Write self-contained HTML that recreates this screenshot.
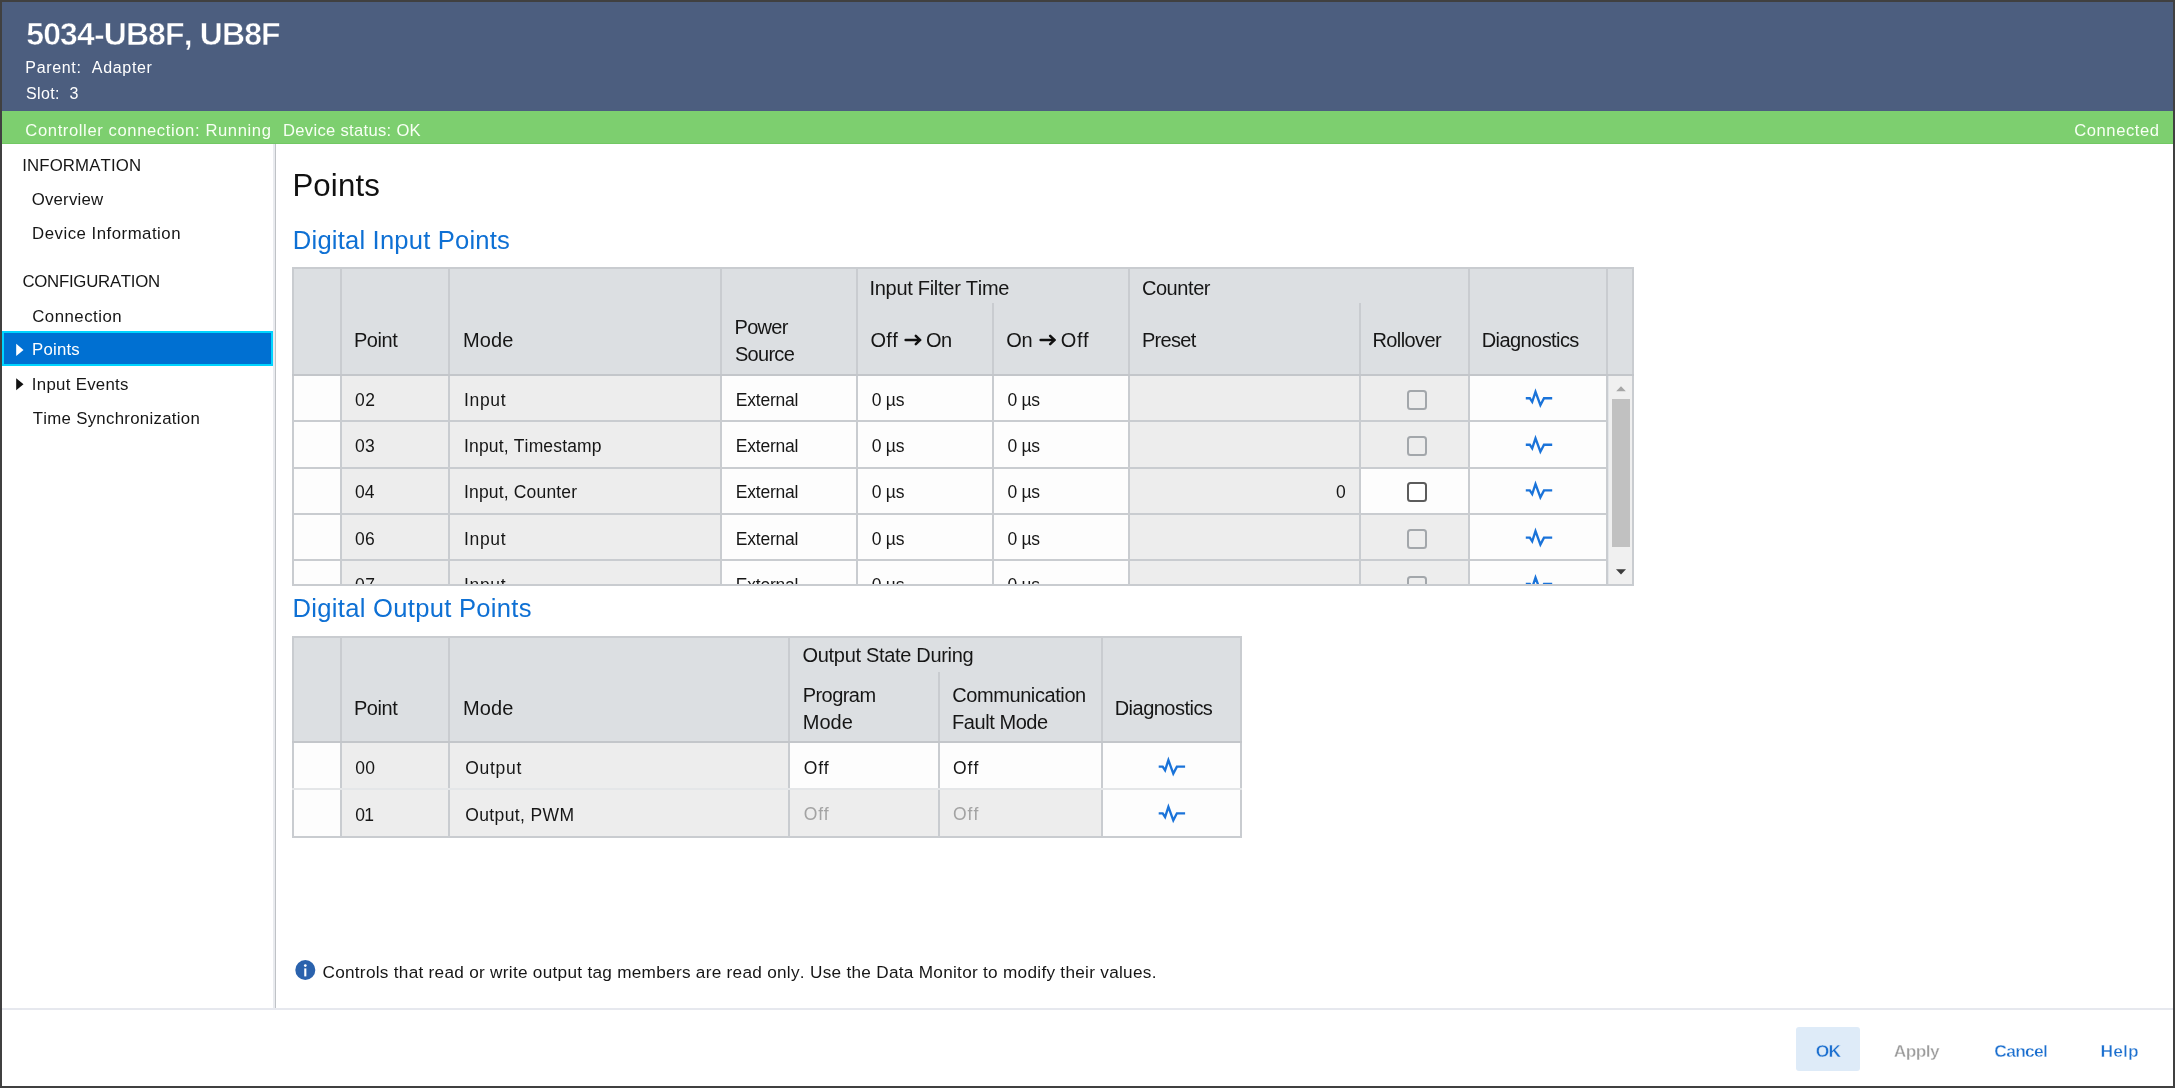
<!DOCTYPE html>
<html><head><meta charset="utf-8"><style>
html,body{margin:0;padding:0;}
body{width:2175px;height:1088px;position:relative;overflow:hidden;background:#fff;font-family:"Liberation Sans",sans-serif;}
.t{position:absolute;line-height:1;white-space:nowrap;font-kerning:none;font-variant-ligatures:none;}
.r{position:absolute;display:block;}
</style></head><body><div id="pg" style="position:absolute;left:0;top:0;width:2175px;height:1088px;filter:blur(0.35px)">
<div class="r" style="left:0px;top:0px;width:2175px;height:1088px;background:#ffffff;"></div>
<div class="r" style="left:0px;top:0px;width:2175px;height:111px;background:#4c5e7f;"></div>
<div class="r" style="left:0px;top:111px;width:2175px;height:33px;background:#7dcf6f;"></div>
<div class="r" style="left:0px;top:143px;width:2175px;height:1px;background:#72c863;"></div>
<div class="t" style="left:26.24px;top:19px;font-size:31.9px;letter-spacing:-0.822px;color:#ffffff;font-weight:bold;-webkit-text-stroke:0.5px #4c5e7f;">5034-UB8F, UB8F</div>
<div class="t" style="left:25.32px;top:60px;font-size:16.0px;letter-spacing:0.672px;color:#ffffff;font-weight:normal;">Parent:&nbsp; Adapter</div>
<div class="t" style="left:25.88px;top:86px;font-size:16.0px;letter-spacing:0.400px;color:#ffffff;font-weight:normal;">Slot:&nbsp; 3</div>
<div class="t" style="left:25.37px;top:123px;font-size:16.6px;letter-spacing:0.609px;color:#f8fff4;font-weight:normal;">Controller connection: Running</div>
<div class="t" style="left:283.07px;top:123px;font-size:16.6px;letter-spacing:0.300px;color:#f8fff4;font-weight:normal;">Device status: OK</div>
<div class="t" style="left:2074.27px;top:123px;font-size:16.6px;letter-spacing:0.551px;color:#f8fff4;font-weight:normal;">Connected</div>
<div class="r" style="left:273px;top:144px;width:2px;height:864px;background:#e9ebef;"></div>
<div class="r" style="left:275px;top:144px;width:1px;height:864px;background:#bfc2c6;"></div>
<div class="r" style="left:2px;top:1008px;width:2171px;height:2px;background:#e6e8ee;"></div>
<div class="t" style="left:22.15px;top:158px;font-size:16.8px;letter-spacing:0.156px;color:#161616;font-weight:normal;">INFORMATION</div>
<div class="t" style="left:31.70px;top:192px;font-size:16.8px;letter-spacing:0.220px;color:#161616;font-weight:normal;">Overview</div>
<div class="t" style="left:32.06px;top:226px;font-size:16.8px;letter-spacing:0.504px;color:#161616;font-weight:normal;">Device Information</div>
<div class="t" style="left:22.46px;top:274px;font-size:16.8px;letter-spacing:-0.259px;color:#161616;font-weight:normal;">CONFIGURATION</div>
<div class="t" style="left:32.26px;top:309px;font-size:16.8px;letter-spacing:0.492px;color:#161616;font-weight:normal;">Connection</div>
<div class="r" style="left:2px;top:331px;width:271px;height:35px;background:#0070d2;box-sizing:border-box;border:2px solid #00d4ff;"></div>
<svg class="r" style="left:14px;top:340px" width="12" height="20" viewBox="0 0 12 20"><path d="M2.2 3.8 L9.5 9.9 L2.2 15.9 Z" fill="#fff"/></svg>
<div class="t" style="left:32.06px;top:342px;font-size:16.8px;letter-spacing:0.206px;color:#ffffff;font-weight:normal;">Points</div>
<svg class="r" style="left:14px;top:375px" width="12" height="20" viewBox="0 0 12 20"><path d="M2.2 3.2 L9.5 9.2 L2.2 15.2 Z" fill="#111"/></svg>
<div class="t" style="left:31.85px;top:377px;font-size:16.8px;letter-spacing:0.303px;color:#161616;font-weight:normal;">Input Events</div>
<div class="t" style="left:32.72px;top:411px;font-size:16.8px;letter-spacing:0.301px;color:#161616;font-weight:normal;">Time Synchronization</div>
<div class="t" style="left:292.40px;top:170px;font-size:31.2px;letter-spacing:0.150px;color:#111111;font-weight:normal;">Points</div>
<div class="t" style="left:292.85px;top:228px;font-size:25.6px;letter-spacing:0.190px;color:#0e70d4;font-weight:normal;">Digital Input Points</div>
<div class="t" style="left:292.55px;top:596px;font-size:25.6px;letter-spacing:0.285px;color:#0e70d4;font-weight:normal;">Digital Output Points</div>
<div class="r" style="left:292px;top:267px;width:1342px;height:108px;background:#dcdfe2;"></div>
<div class="r" style="left:292px;top:375px;width:1342px;height:211px;background:#fdfdfd;"></div>
<div class="r" style="left:342px;top:376px;width:106px;height:44px;background:#ededed;"></div>
<div class="r" style="left:450px;top:376px;width:270px;height:44px;background:#ededed;"></div>
<div class="r" style="left:1130px;top:376px;width:229px;height:44px;background:#ededed;"></div>
<div class="r" style="left:1361px;top:376px;width:107px;height:44px;background:#ededed;"></div>
<div class="r" style="left:342px;top:422px;width:106px;height:45px;background:#ededed;"></div>
<div class="r" style="left:450px;top:422px;width:270px;height:45px;background:#ededed;"></div>
<div class="r" style="left:1130px;top:422px;width:229px;height:45px;background:#ededed;"></div>
<div class="r" style="left:1361px;top:422px;width:107px;height:45px;background:#ededed;"></div>
<div class="r" style="left:342px;top:469px;width:106px;height:44px;background:#ededed;"></div>
<div class="r" style="left:450px;top:469px;width:270px;height:44px;background:#ededed;"></div>
<div class="r" style="left:1130px;top:469px;width:229px;height:44px;background:#ededed;"></div>
<div class="r" style="left:342px;top:515px;width:106px;height:44px;background:#ededed;"></div>
<div class="r" style="left:450px;top:515px;width:270px;height:44px;background:#ededed;"></div>
<div class="r" style="left:1130px;top:515px;width:229px;height:44px;background:#ededed;"></div>
<div class="r" style="left:1361px;top:515px;width:107px;height:44px;background:#ededed;"></div>
<div class="r" style="left:342px;top:561px;width:106px;height:23px;background:#ededed;"></div>
<div class="r" style="left:450px;top:561px;width:270px;height:23px;background:#ededed;"></div>
<div class="r" style="left:1130px;top:561px;width:229px;height:23px;background:#ededed;"></div>
<div class="r" style="left:1361px;top:561px;width:107px;height:23px;background:#ededed;"></div>
<div class="r" style="left:1608px;top:376px;width:24px;height:208px;background:#f0f0f0;"></div>
<div class="r" style="left:1608px;top:376px;width:1px;height:208px;background:#e2e5e8;"></div>
<div class="r" style="left:1612px;top:399px;width:18px;height:148px;background:#c1c1c1;"></div>
<svg class="r" style="left:1614px;top:383px" width="14" height="10" viewBox="0 0 14 10"><path d="M2.2 8.2 L7 3.2 L11.8 8.2 Z" fill="#a6a6a6"/></svg>
<svg class="r" style="left:1614px;top:566px" width="14" height="10" viewBox="0 0 14 10"><path d="M2 3.2 L7 8.6 L12 3.2 Z" fill="#3c3c3c"/></svg>
<div class="r" style="left:292px;top:267px;width:2px;height:319px;background:#c9ccd0;"></div>
<div class="r" style="left:340px;top:267px;width:2px;height:319px;background:#c9ccd0;"></div>
<div class="r" style="left:448px;top:267px;width:2px;height:319px;background:#c9ccd0;"></div>
<div class="r" style="left:720px;top:267px;width:2px;height:319px;background:#c9ccd0;"></div>
<div class="r" style="left:856px;top:267px;width:2px;height:319px;background:#c9ccd0;"></div>
<div class="r" style="left:992px;top:303px;width:2px;height:72px;background:#c9ccd0;"></div>
<div class="r" style="left:992px;top:375px;width:2px;height:209px;background:#c9ccd0;"></div>
<div class="r" style="left:1128px;top:267px;width:2px;height:319px;background:#c9ccd0;"></div>
<div class="r" style="left:1359px;top:303px;width:2px;height:72px;background:#c9ccd0;"></div>
<div class="r" style="left:1359px;top:375px;width:2px;height:209px;background:#c9ccd0;"></div>
<div class="r" style="left:1468px;top:267px;width:2px;height:319px;background:#c9ccd0;"></div>
<div class="r" style="left:1606px;top:267px;width:2px;height:319px;background:#c9ccd0;"></div>
<div class="r" style="left:1632px;top:267px;width:2px;height:319px;background:#c9ccd0;"></div>
<div class="r" style="left:292px;top:267px;width:1342px;height:2px;background:#c9ccd0;"></div>
<div class="r" style="left:292px;top:374px;width:1342px;height:2px;background:#c3c6ca;"></div>
<div class="r" style="left:292px;top:420px;width:1314px;height:2px;background:#c9ccd0;"></div>
<div class="r" style="left:292px;top:467px;width:1314px;height:2px;background:#c9ccd0;"></div>
<div class="r" style="left:292px;top:513px;width:1314px;height:2px;background:#c9ccd0;"></div>
<div class="r" style="left:292px;top:559px;width:1314px;height:2px;background:#c9ccd0;"></div>
<div class="r" style="left:292px;top:584px;width:1342px;height:2px;background:#c9ccd0;"></div>
<div class="t" style="left:354.00px;top:330px;font-size:20.0px;letter-spacing:-0.475px;color:#161616;font-weight:normal;">Point</div>
<div class="t" style="left:462.90px;top:330px;font-size:20.0px;letter-spacing:0.117px;color:#161616;font-weight:normal;">Mode</div>
<div class="t" style="left:734.50px;top:317px;font-size:20.0px;letter-spacing:-0.700px;color:#161616;font-weight:normal;">Power</div>
<div class="t" style="left:734.90px;top:344px;font-size:20.0px;letter-spacing:-0.700px;color:#161616;font-weight:normal;">Source</div>
<div class="t" style="left:869.45px;top:278px;font-size:20.0px;letter-spacing:-0.284px;color:#161616;font-weight:normal;">Input Filter Time</div>
<div class="t" style="left:870.45px;top:330px;font-size:20.0px;letter-spacing:0.300px;color:#161616;font-weight:normal;">Off</div>
<svg class="r" style="left:903px;top:333px" width="19" height="14" viewBox="0 0 19 14"><path d="M2.6 7 H16.7" stroke="#111" stroke-width="2.5" stroke-linecap="round"/><path d="M12.8 2.9 L17 7 L12.8 11.1" fill="none" stroke="#111" stroke-width="2.5" stroke-linecap="round" stroke-linejoin="miter"/></svg>
<div class="t" style="left:926.05px;top:330px;font-size:20.0px;letter-spacing:-0.700px;color:#161616;font-weight:normal;">On</div>
<div class="t" style="left:1006.25px;top:330px;font-size:20.0px;letter-spacing:-0.250px;color:#161616;font-weight:normal;">On</div>
<svg class="r" style="left:1037.6px;top:333px" width="18.40000000000009" height="14" viewBox="0 0 18.40000000000009 14"><path d="M2.6 7 H16.10000000000009" stroke="#111" stroke-width="2.5" stroke-linecap="round"/><path d="M12.200000000000092 2.9 L16.40000000000009 7 L12.200000000000092 11.1" fill="none" stroke="#111" stroke-width="2.5" stroke-linecap="round" stroke-linejoin="miter"/></svg>
<div class="t" style="left:1060.85px;top:330px;font-size:20.0px;letter-spacing:0.550px;color:#161616;font-weight:normal;">Off</div>
<div class="t" style="left:1141.90px;top:278px;font-size:20.0px;letter-spacing:-0.425px;color:#161616;font-weight:normal;">Counter</div>
<div class="t" style="left:1141.90px;top:330px;font-size:20.0px;letter-spacing:-0.700px;color:#161616;font-weight:normal;">Preset</div>
<div class="t" style="left:1372.40px;top:330px;font-size:20.0px;letter-spacing:-0.579px;color:#161616;font-weight:normal;">Rollover</div>
<div class="t" style="left:1481.70px;top:330px;font-size:20.0px;letter-spacing:-0.570px;color:#161616;font-weight:normal;">Diagnostics</div>
<div class="r" style="left:0px;top:376px;width:1606px;height:208px;overflow:hidden">
<div class="t" style="left:354.94px;top:16.0px;font-size:17.5px;letter-spacing:0.462px;color:#161616;font-weight:normal;">02</div>
<div class="t" style="left:463.98px;top:16.0px;font-size:17.5px;letter-spacing:0.667px;color:#161616;font-weight:normal;">Input</div>
<div class="t" style="left:735.80px;top:16.0px;font-size:17.5px;letter-spacing:-0.221px;color:#161616;font-weight:normal;">External</div>
<div class="t" style="left:871.74px;top:16.0px;font-size:17.5px;letter-spacing:-0.252px;color:#161616;font-weight:normal;">0 µs</div>
<div class="t" style="left:1007.44px;top:16.0px;font-size:17.5px;letter-spacing:-0.252px;color:#161616;font-weight:normal;">0 µs</div>
<div class="r" style="left:1407px;top:14.0px;width:20px;height:20px;box-sizing:border-box;border:2px solid #a3a7ab;border-radius:3.5px;background:transparent"></div>
<svg class="r" style="left:1523px;top:9.0px" width="34" height="28" viewBox="0 0 34 28"><path d="M2.80 13.20 L6.80 13.20 L9.20 16.90 L12.50 6.80 L17.40 20.20 L21.00 13.20 L29.20 13.20" fill="none" stroke="#1a73d9" stroke-width="2.35" stroke-linejoin="miter" stroke-miterlimit="6"/></svg>
<div class="t" style="left:354.94px;top:62.0px;font-size:17.5px;letter-spacing:0.375px;color:#161616;font-weight:normal;">03</div>
<div class="t" style="left:463.98px;top:62.0px;font-size:17.5px;letter-spacing:0.160px;color:#161616;font-weight:normal;">Input, Timestamp</div>
<div class="t" style="left:735.80px;top:62.0px;font-size:17.5px;letter-spacing:-0.221px;color:#161616;font-weight:normal;">External</div>
<div class="t" style="left:871.74px;top:62.0px;font-size:17.5px;letter-spacing:-0.252px;color:#161616;font-weight:normal;">0 µs</div>
<div class="t" style="left:1007.44px;top:62.0px;font-size:17.5px;letter-spacing:-0.252px;color:#161616;font-weight:normal;">0 µs</div>
<div class="r" style="left:1407px;top:60.0px;width:20px;height:20px;box-sizing:border-box;border:2px solid #a3a7ab;border-radius:3.5px;background:transparent"></div>
<svg class="r" style="left:1523px;top:55.0px" width="34" height="28" viewBox="0 0 34 28"><path d="M2.80 13.70 L6.80 13.70 L9.20 17.40 L12.50 7.30 L17.40 20.70 L21.00 13.70 L29.20 13.70" fill="none" stroke="#1a73d9" stroke-width="2.35" stroke-linejoin="miter" stroke-miterlimit="6"/></svg>
<div class="t" style="left:354.94px;top:108.0px;font-size:17.5px;letter-spacing:0.112px;color:#161616;font-weight:normal;">04</div>
<div class="t" style="left:463.98px;top:108.0px;font-size:17.5px;letter-spacing:0.167px;color:#161616;font-weight:normal;">Input, Counter</div>
<div class="t" style="left:735.80px;top:108.0px;font-size:17.5px;letter-spacing:-0.221px;color:#161616;font-weight:normal;">External</div>
<div class="t" style="left:871.74px;top:108.0px;font-size:17.5px;letter-spacing:-0.252px;color:#161616;font-weight:normal;">0 µs</div>
<div class="t" style="left:1007.44px;top:108.0px;font-size:17.5px;letter-spacing:-0.252px;color:#161616;font-weight:normal;">0 µs</div>
<div class="t" style="left:1335.94px;top:108.0px;font-size:17.5px;letter-spacing:0.000px;color:#161616;font-weight:normal;">0</div>
<div class="r" style="left:1407px;top:106.0px;width:20px;height:20px;box-sizing:border-box;border:2px solid #5c5c5c;border-radius:3.5px;background:#fff"></div>
<svg class="r" style="left:1523px;top:101.0px" width="34" height="28" viewBox="0 0 34 28"><path d="M2.80 13.40 L6.80 13.40 L9.20 17.10 L12.50 7.00 L17.40 20.40 L21.00 13.40 L29.20 13.40" fill="none" stroke="#1a73d9" stroke-width="2.35" stroke-linejoin="miter" stroke-miterlimit="6"/></svg>
<div class="t" style="left:354.94px;top:155.0px;font-size:17.5px;letter-spacing:0.375px;color:#161616;font-weight:normal;">06</div>
<div class="t" style="left:463.98px;top:155.0px;font-size:17.5px;letter-spacing:0.667px;color:#161616;font-weight:normal;">Input</div>
<div class="t" style="left:735.80px;top:155.0px;font-size:17.5px;letter-spacing:-0.221px;color:#161616;font-weight:normal;">External</div>
<div class="t" style="left:871.74px;top:155.0px;font-size:17.5px;letter-spacing:-0.252px;color:#161616;font-weight:normal;">0 µs</div>
<div class="t" style="left:1007.44px;top:155.0px;font-size:17.5px;letter-spacing:-0.252px;color:#161616;font-weight:normal;">0 µs</div>
<div class="r" style="left:1407px;top:153.0px;width:20px;height:20px;box-sizing:border-box;border:2px solid #a3a7ab;border-radius:3.5px;background:transparent"></div>
<svg class="r" style="left:1523px;top:148.0px" width="34" height="28" viewBox="0 0 34 28"><path d="M2.80 13.60 L6.80 13.60 L9.20 17.30 L12.50 7.20 L17.40 20.60 L21.00 13.60 L29.20 13.60" fill="none" stroke="#1a73d9" stroke-width="2.35" stroke-linejoin="miter" stroke-miterlimit="6"/></svg>
<div class="t" style="left:354.94px;top:201.0px;font-size:17.5px;letter-spacing:0.462px;color:#161616;font-weight:normal;">07</div>
<div class="t" style="left:463.98px;top:201.0px;font-size:17.5px;letter-spacing:0.667px;color:#161616;font-weight:normal;">Input</div>
<div class="t" style="left:735.80px;top:201.0px;font-size:17.5px;letter-spacing:-0.221px;color:#161616;font-weight:normal;">External</div>
<div class="t" style="left:871.74px;top:201.0px;font-size:17.5px;letter-spacing:-0.252px;color:#161616;font-weight:normal;">0 µs</div>
<div class="t" style="left:1007.44px;top:201.0px;font-size:17.5px;letter-spacing:-0.252px;color:#161616;font-weight:normal;">0 µs</div>
<div class="r" style="left:1407px;top:200.0px;width:20px;height:20px;box-sizing:border-box;border:2px solid #a3a7ab;border-radius:3.5px;background:transparent"></div>
<svg class="r" style="left:1523px;top:195.0px" width="34" height="28" viewBox="0 0 34 28"><path d="M2.80 13.00 L6.80 13.00 L9.20 16.70 L12.50 6.60 L17.40 20.00 L21.00 13.00 L29.20 13.00" fill="none" stroke="#1a73d9" stroke-width="2.35" stroke-linejoin="miter" stroke-miterlimit="6"/></svg>
</div>
<div class="r" style="left:292px;top:636px;width:950px;height:105px;background:#dcdfe2;"></div>
<div class="r" style="left:292px;top:741px;width:950px;height:97px;background:#fdfdfd;"></div>
<div class="r" style="left:342px;top:743px;width:106px;height:45px;background:#ededed;"></div>
<div class="r" style="left:450px;top:743px;width:338px;height:45px;background:#ededed;"></div>
<div class="r" style="left:342px;top:790px;width:106px;height:46px;background:#ededed;"></div>
<div class="r" style="left:450px;top:790px;width:338px;height:46px;background:#ededed;"></div>
<div class="r" style="left:790px;top:790px;width:148px;height:46px;background:#ededed;"></div>
<div class="r" style="left:940px;top:790px;width:161px;height:46px;background:#ededed;"></div>
<div class="r" style="left:292px;top:636px;width:2px;height:202px;background:#c9ccd0;"></div>
<div class="r" style="left:340px;top:636px;width:2px;height:202px;background:#c9ccd0;"></div>
<div class="r" style="left:448px;top:636px;width:2px;height:202px;background:#c9ccd0;"></div>
<div class="r" style="left:788px;top:636px;width:2px;height:202px;background:#c9ccd0;"></div>
<div class="r" style="left:938px;top:672px;width:2px;height:69px;background:#c9ccd0;"></div>
<div class="r" style="left:938px;top:741px;width:2px;height:95px;background:#c9ccd0;"></div>
<div class="r" style="left:1101px;top:636px;width:2px;height:202px;background:#c9ccd0;"></div>
<div class="r" style="left:1240px;top:636px;width:2px;height:202px;background:#c9ccd0;"></div>
<div class="r" style="left:292px;top:636px;width:950px;height:2px;background:#c9ccd0;"></div>
<div class="r" style="left:292px;top:741px;width:950px;height:2px;background:#c3c6ca;"></div>
<div class="r" style="left:292px;top:788px;width:950px;height:2px;background:#e4e6e8;"></div>
<div class="r" style="left:292px;top:836px;width:950px;height:2px;background:#c9ccd0;"></div>
<div class="t" style="left:354.00px;top:698px;font-size:20.0px;letter-spacing:-0.475px;color:#161616;font-weight:normal;">Point</div>
<div class="t" style="left:462.90px;top:698px;font-size:20.0px;letter-spacing:0.117px;color:#161616;font-weight:normal;">Mode</div>
<div class="t" style="left:802.55px;top:645px;font-size:20.0px;letter-spacing:-0.314px;color:#161616;font-weight:normal;">Output State During</div>
<div class="t" style="left:802.70px;top:685px;font-size:20.0px;letter-spacing:-0.550px;color:#161616;font-weight:normal;">Program</div>
<div class="t" style="left:802.70px;top:712px;font-size:20.0px;letter-spacing:0.050px;color:#161616;font-weight:normal;">Mode</div>
<div class="t" style="left:952.20px;top:685px;font-size:20.0px;letter-spacing:-0.408px;color:#161616;font-weight:normal;">Communication</div>
<div class="t" style="left:952.00px;top:712px;font-size:20.0px;letter-spacing:-0.433px;color:#161616;font-weight:normal;">Fault Mode</div>
<div class="t" style="left:1114.70px;top:698px;font-size:20.0px;letter-spacing:-0.520px;color:#161616;font-weight:normal;">Diagnostics</div>
<div class="t" style="left:355.14px;top:760px;font-size:17.5px;letter-spacing:0.388px;color:#161616;font-weight:normal;">00</div>
<div class="t" style="left:465.17px;top:760px;font-size:17.5px;letter-spacing:0.735px;color:#161616;font-weight:normal;">Output</div>
<div class="t" style="left:803.87px;top:760px;font-size:17.5px;letter-spacing:0.737px;color:#161616;font-weight:normal;">Off</div>
<div class="t" style="left:952.97px;top:760px;font-size:17.5px;letter-spacing:1.038px;color:#161616;font-weight:normal;">Off</div>
<svg class="r" style="left:1156px;top:753px" width="34" height="28" viewBox="0 0 34 28"><path d="M2.70 13.60 L6.70 13.60 L9.10 17.30 L12.40 7.20 L17.30 20.60 L20.90 13.60 L29.10 13.60" fill="none" stroke="#1a73d9" stroke-width="2.35" stroke-linejoin="miter" stroke-miterlimit="6"/></svg>
<div class="t" style="left:355.14px;top:807px;font-size:17.5px;letter-spacing:-0.700px;color:#161616;font-weight:normal;">01</div>
<div class="t" style="left:465.17px;top:807px;font-size:17.5px;letter-spacing:0.393px;color:#161616;font-weight:normal;">Output, PWM</div>
<div class="t" style="left:803.87px;top:806px;font-size:17.5px;letter-spacing:0.737px;color:#a3a3a3;font-weight:normal;">Off</div>
<div class="t" style="left:952.97px;top:806px;font-size:17.5px;letter-spacing:1.038px;color:#a3a3a3;font-weight:normal;">Off</div>
<svg class="r" style="left:1156px;top:800px" width="34" height="28" viewBox="0 0 34 28"><path d="M2.70 13.30 L6.70 13.30 L9.10 17.00 L12.40 6.90 L17.30 20.30 L20.90 13.30 L29.10 13.30" fill="none" stroke="#1a73d9" stroke-width="2.35" stroke-linejoin="miter" stroke-miterlimit="6"/></svg>
<svg class="r" style="left:294px;top:959px" width="22" height="22" viewBox="0 0 22 22"><circle cx="11.3" cy="11" r="10" fill="#2a62ad"/><circle cx="11.3" cy="6.6" r="1.35" fill="#fff"/><rect x="10.25" y="9.4" width="2.1" height="8.0" fill="#fff"/></svg>
<div class="t" style="left:322.44px;top:964px;font-size:17.2px;letter-spacing:0.282px;color:#161616;font-weight:normal;">Controls that read or write output tag members are read only. Use the Data Monitor to modify their values.</div>
<div class="r" style="left:1796px;top:1027px;width:64px;height:44px;background:#deebf8;border-radius:3px;"></div>
<div class="t" style="left:1815.70px;top:1043px;font-size:17.4px;letter-spacing:-0.700px;color:#1b6fcf;font-weight:bold;-webkit-text-stroke:0.4px #deebf8;">OK</div>
<div class="t" style="left:1893.66px;top:1043px;font-size:17.4px;letter-spacing:-0.552px;color:#9c9c9c;font-weight:bold;-webkit-text-stroke:0.4px #fff;">Apply</div>
<div class="t" style="left:1994.30px;top:1043px;font-size:17.4px;letter-spacing:-0.700px;color:#1b6fcf;font-weight:bold;-webkit-text-stroke:0.4px #fff;">Cancel</div>
<div class="t" style="left:2100.57px;top:1043px;font-size:17.4px;letter-spacing:0.119px;color:#1b6fcf;font-weight:bold;-webkit-text-stroke:0.4px #fff;">Help</div>
</div>
<div class="r" style="left:0;top:0;width:2175px;height:2px;background:#404040"></div>
<div class="r" style="left:0;top:1086px;width:2175px;height:2px;background:#404040"></div>
<div class="r" style="left:0;top:0;width:2px;height:1088px;background:#404040"></div>
<div class="r" style="left:2173px;top:0;width:2px;height:1088px;background:#404040"></div>
</body></html>
